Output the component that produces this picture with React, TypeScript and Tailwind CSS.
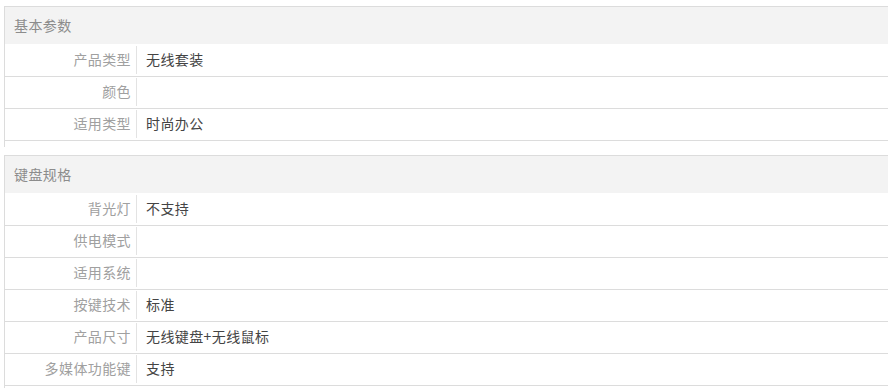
const sections = [
  {
    title: '基本参数',
    rows: [
      ['产品类型', '无线套装'],
      ['颜色', ''],
      ['适用类型', '时尚办公'],
    ],
  },
  {
    title: '键盘规格',
    rows: [
      ['背光灯', '不支持'],
      ['供电模式', ''],
      ['适用系统', ''],
      ['按键技术', '标准'],
      ['产品尺寸', '无线键盘+无线鼠标'],
      ['多媒体功能键', '支持'],
    ],
  },
];

export default function App() {
  return (
    <div
      className="w-[891px] h-[388px] overflow-hidden bg-white pt-[6px] pl-[4px] pr-[3px] text-[14px] leading-[16px] tracking-[0.4px]"
      style={{ fontFamily: '"Microsoft YaHei", "Noto Sans CJK SC", sans-serif' }}
    >
      {sections.map((s) => (
        <div key={s.title} className="border-t border-l border-[#dcdcdc] pb-[6px] mb-[8px]">
          <div className="h-[37px] bg-[#f3f3f3] pl-[9px] pb-[2px] flex items-center text-[#8c8c8c]">{s.title}</div>
          <div className="pt-px">
            {s.rows.map(([k, v]) => (
              <div key={k} className="h-[32px] flex items-stretch border-b border-[#dcdcdc]">
                <div className="w-[132px] mt-px mb-[2px] border-r border-[#e3e3e3] pr-[5px] pb-[2px] flex items-center justify-end text-[#a0a0a0]">
                  {k}
                </div>
                <div className="pl-[9px] pb-[3px] flex items-center text-[#444]">{v}</div>
              </div>
            ))}
          </div>
        </div>
      ))}
    </div>
  );
}
